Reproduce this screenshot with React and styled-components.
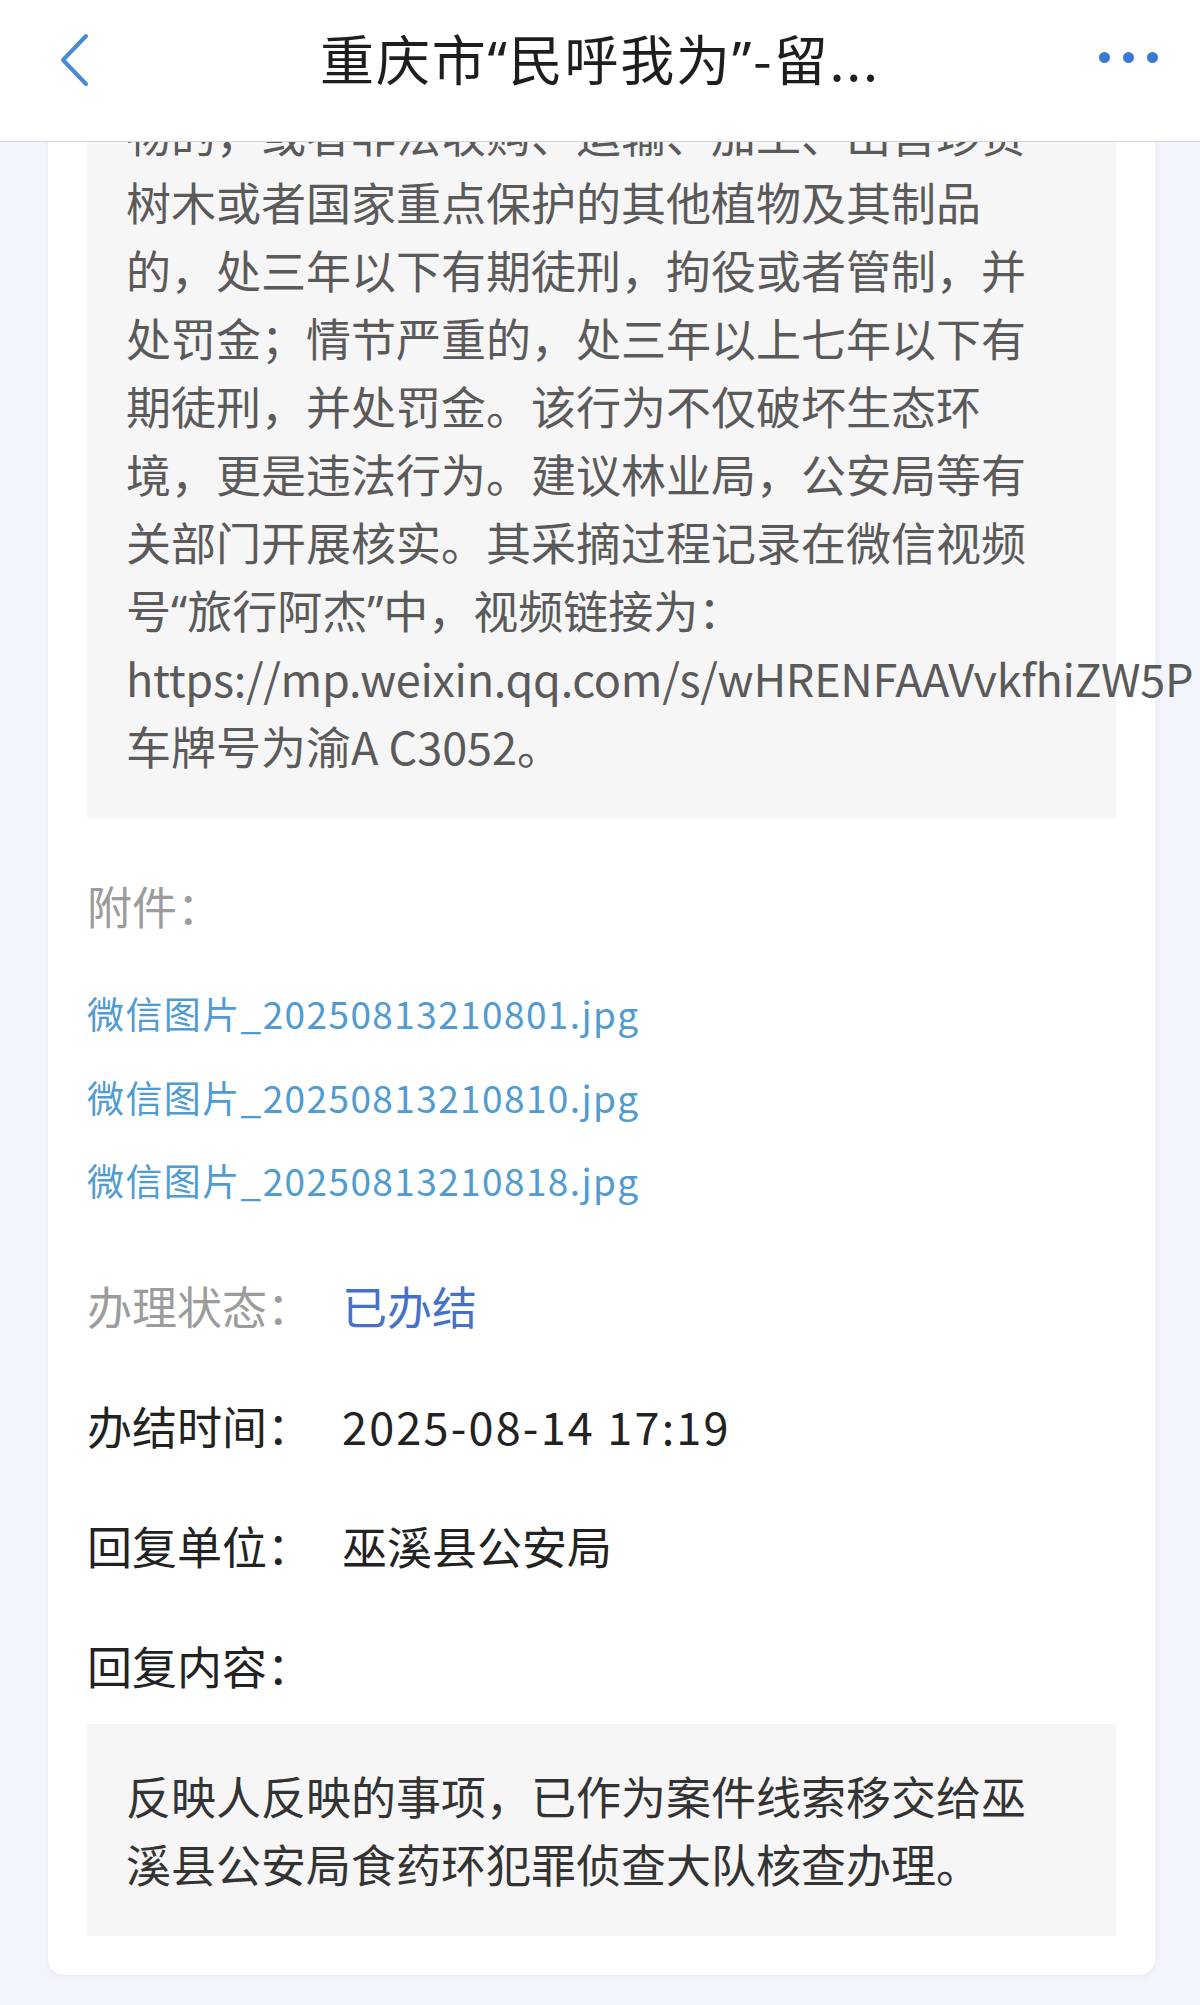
import React from "react";
import styled, { createGlobalStyle } from "styled-components";

const videoUrl = "https://mp.weixin.qq.com/s/wHRENFAAVvkfhiZW5P";

const attachments = [
  "微信图片_20250813210801.jpg",
  "微信图片_20250813210810.jpg",
  "微信图片_20250813210818.jpg",
];

const rows = [
  { label: "办理状态：", value: "已办结", muted: true, status: true },
  { label: "办结时间：", value: "2025-08-14 17:19", numeric: true },
  { label: "回复单位：", value: "巫溪县公安局" },
  { label: "回复内容：", value: "" },
];

export default function App() {
  return (
    <>
      <GlobalStyle />
      <Header>
        <BackButton>
          <svg width="40" height="60" viewBox="0 0 40 60">
            <polyline
              points="30,6 7,30 30,54"
              fill="none"
              stroke="#4a89d6"
              strokeWidth="4"
              strokeLinecap="round"
              strokeLinejoin="round"
            />
          </svg>
        </BackButton>
        <Title>
          重庆市<Quote>“</Quote>民呼我为<Quote>”</Quote>-留...
        </Title>
        <MoreButton>
          <Dot />
          <Dot />
          <Dot />
        </MoreButton>
      </Header>

      <Page>
        <Card>
          <TextBox>
            物的，或者非法收购、运输、加工、出售珍贵树木或者国家重点保护的其他植物及其制品的，处三年以下有期徒刑，拘役或者管制，并处罚金；情节严重的，处三年以上七年以下有期徒刑，并处罚金。该行为不仅破坏生态环境，更是违法行为。建议林业局，公安局等有关部门开展核实。其采摘过程记录在微信视频号
            <Quote>“</Quote>旅行阿杰<Quote>”</Quote>中，视频链接为：
            <Url>{videoUrl}</Url>
            车牌号为渝A C3052。
          </TextBox>

          <SectionTitle>附件：</SectionTitle>
          <AttachList>
            {attachments.map((name) => (
              <Attachment key={name}>{name}</Attachment>
            ))}
          </AttachList>

          <InfoList>
            {rows.map((row) => (
              <InfoRow key={row.label}>
                <InfoLabel $muted={row.muted}>{row.label}</InfoLabel>
                <InfoValue $status={row.status} $numeric={row.numeric}>
                  {row.value}
                </InfoValue>
              </InfoRow>
            ))}
          </InfoList>

          <ReplyBox>
            反映人反映的事项，已作为案件线索移交给巫溪县公安局食药环犯罪侦查大队核查办理。
          </ReplyBox>
        </Card>
      </Page>
    </>
  );
}

const GlobalStyle = createGlobalStyle`
  html, body {
    margin: 0;
    padding: 0;
    background: #f2f5fd;
    overflow-x: hidden;
  }

  body {
    font-family: "Noto Sans CJK SC", "Noto Sans", sans-serif;
    color: #222;
  }
`;

const Header = styled.header`
  position: fixed;
  top: 0;
  left: 0;
  right: 0;
  z-index: 10;
  height: 142px;
  background: #fff;
  border-bottom: 1px solid #d4d4d4;
  display: grid;
  grid-template-columns: 160px 1fr 160px;
  align-items: center;
  padding-bottom: 26px;
  box-sizing: border-box;
`;

const BackButton = styled.div`
  display: flex;
  align-items: center;
  padding-left: 56px;
  padding-top: 4px;
`;

const Title = styled.h1`
  margin: 0;
  text-align: center;
  font-size: 54px;
  font-weight: 400;
  letter-spacing: 1.8px;
  color: #1e1e1e;
  white-space: nowrap;
`;

/* CJK font draws curly quotes full-width; the reference uses narrow ones */
const Quote = styled.span`
  font-family: "Noto Sans", sans-serif;
  line-height: 0;
`;

const MoreButton = styled.div`
  display: flex;
  justify-content: flex-end;
  gap: 13px;
  padding-right: 42px;
`;

const Dot = styled.span`
  width: 11px;
  height: 11px;
  border-radius: 50%;
  background: #3b78d6;
`;

const Page = styled.main`
  padding: 23px 45px 27px 48px;
`;

const Card = styled.section`
  background: #fff;
  border-radius: 16px;
  padding: 39px;
  box-shadow: 0 2px 6px rgba(180, 190, 215, 0.18);
`;

const TextBox = styled.div`
  background: #f6f6f6;
  padding: 38px 60px 38px 39px;
  font-size: 45px;
  line-height: 68px;
  color: #5a5a5a;
`;

const Url = styled.span`
  white-space: nowrap;
  letter-spacing: -0.3px;
`;

const SectionTitle = styled.div`
  margin-top: 58px;
  font-size: 45px;
  line-height: 60px;
  color: #9c9c9c;
`;

const AttachList = styled.div`
  margin-top: 47px;
  display: flex;
  flex-direction: column;
  gap: 23.5px;
`;

const Attachment = styled.a`
  font-size: 37px;
  line-height: 60px;
  letter-spacing: 1.4px;
  color: #4f9bd2;
  text-decoration: none;
`;

const InfoList = styled.div`
  margin-top: 66px;
  display: flex;
  flex-direction: column;
  gap: 60px;
`;

const InfoRow = styled.div`
  display: flex;
  align-items: center;
  font-size: 45px;
  line-height: 60px;
`;

const InfoLabel = styled.span`
  width: 255px;
  flex-shrink: 0;
  color: ${(p) => (p.$muted ? "#9c9c9c" : "#222")};
`;

const InfoValue = styled.span`
  color: ${(p) => (p.$status ? "#4572c9" : "#222")};
  letter-spacing: ${(p) => (p.$numeric ? "2.2px" : "0")};
`;

const ReplyBox = styled.div`
  margin-top: 28px;
  background: #f6f6f6;
  padding: 38px 60px 38px 39px;
  font-size: 45px;
  line-height: 68px;
  color: #333;
`;
